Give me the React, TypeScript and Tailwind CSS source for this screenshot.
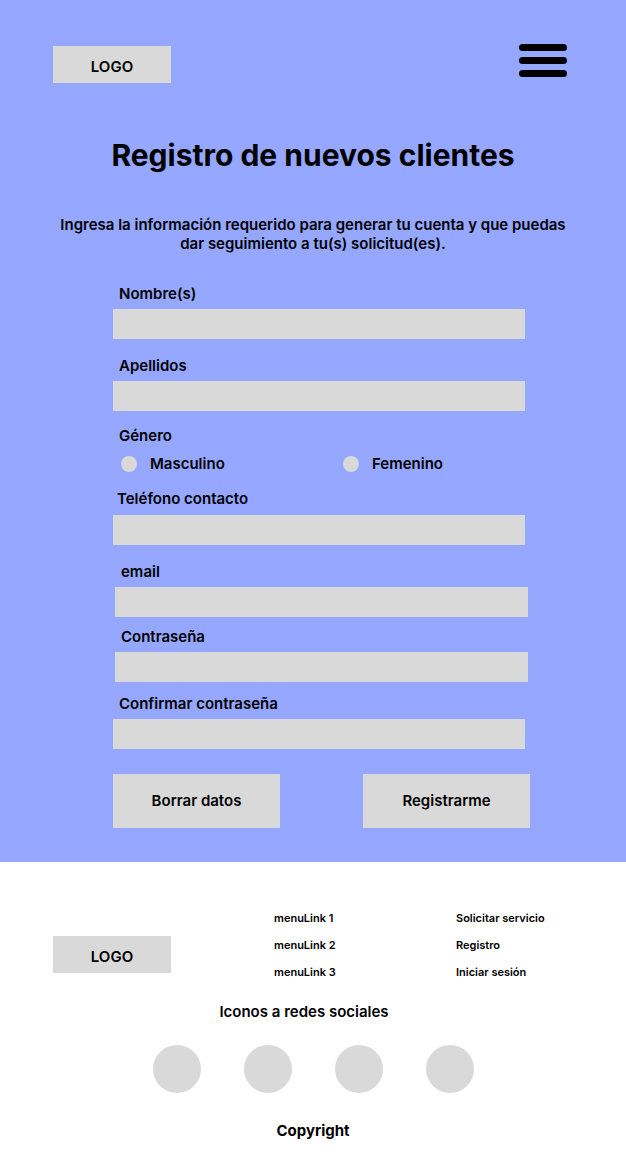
import React from "react";

type FieldProps = {
  label: string;
  labelClass: string;
  boxClass: string;
};

function Field({ label, labelClass, boxClass }: FieldProps) {
  return (
    <div className="flex flex-col">
      <label className={`text-[15px] leading-[18px] font-semibold text-black ${labelClass}`}>
        {label}
      </label>
      <div className={`h-[30px] bg-[#d9d9d9] ${boxClass}`} />
    </div>
  );
}

function Radio({ label }: { label: string }) {
  return (
    <div className="flex items-center">
      <span className="w-4 h-4 rounded-full bg-[#d9d9d9]" />
      <span className="ml-[13px] text-[15px] leading-[18px] font-semibold">{label}</span>
    </div>
  );
}

function Logo({ className }: { className: string }) {
  return (
    <div
      className={`w-[118px] h-[37px] pt-[6px] bg-[#d9d9d9] flex items-center justify-center text-[15px] font-semibold ${className}`}
    >
      LOGO
    </div>
  );
}

export default function App() {
  return (
    <div className="w-[626px] min-h-[1165px] bg-white text-black font-['Inter','Noto_Sans',sans-serif]">
      {/* registro */}
      <section className="bg-[#95a7ff] pb-[34px]">
        <header className="flex items-start justify-between pl-[53px] pr-[59px] pt-[44px]">
          <Logo className="mt-[2px]" />
          <div className="flex flex-col gap-[6px]">
            <span className="block w-12 h-[7px] rounded-full bg-black" />
            <span className="block w-12 h-[7px] rounded-full bg-black" />
            <span className="block w-12 h-[7px] rounded-full bg-black" />
          </div>
        </header>

        <h1 className="mt-[54px] text-center text-[30px] leading-[36px] font-bold">
          Registro de nuevos clientes
        </h1>
        <p className="mt-[42px] px-[40px] text-center text-[15px] leading-[19px] font-semibold">
          Ingresa la información requerido para generar tu cuenta y que puedas
          <br />
          dar seguimiento a tu(s) solicitud(es).
        </p>

        <form className="mt-[32px] ml-[113px] w-[417px] flex flex-col">
          <Field label="Nombre(s)" labelClass="ml-[6px] mb-[6px]" boxClass="w-[412px]" />
          <div className="mt-[18px]">
            <Field label="Apellidos" labelClass="ml-[6px] mb-[6px]" boxClass="w-[412px]" />
          </div>

          <div className="mt-[16px] flex flex-col">
            <span className="block ml-[6px] text-[15px] leading-[18px] font-semibold">Género</span>
            <div className="mt-[10px] ml-[8px] flex">
              <div className="w-[222px]">
                <Radio label="Masculino" />
              </div>
              <Radio label="Femenino" />
            </div>
          </div>

          <div className="mt-[17px]">
            <Field label="Teléfono contacto" labelClass="ml-[4px] mb-[7px]" boxClass="w-[412px]" />
          </div>
          <div className="mt-[18px]">
            <Field label="email" labelClass="ml-[8px] mb-[6px]" boxClass="ml-[2px] w-[413px]" />
          </div>
          <div className="mt-[11px]">
            <Field label="Contraseña" labelClass="ml-[8px] mb-[6px]" boxClass="ml-[2px] w-[413px]" />
          </div>
          <div className="mt-[13px]">
            <Field label="Confirmar contraseña" labelClass="ml-[6px] mb-[6px]" boxClass="w-[412px]" />
          </div>

          <div className="mt-[25px] flex justify-between">
            <button type="button" className="w-[167px] h-[54px] bg-[#d9d9d9] text-[15px] font-semibold">
              Borrar datos
            </button>
            <button type="button" className="w-[167px] h-[54px] bg-[#d9d9d9] text-[15px] font-semibold">
              Registrarme
            </button>
          </div>
        </form>
      </section>

      {/* footer */}
      <footer className="pt-[43px] pb-[25px]">
        <div className="flex items-start pl-[53px]">
          <Logo className="mt-[31px]" />
          <ul className="ml-[103px] w-[182px] text-[11px] leading-[27px] font-semibold">
            <li>menuLink 1</li>
            <li>menuLink 2</li>
            <li>menuLink 3</li>
          </ul>
          <ul className="text-[11px] leading-[27px] font-semibold">
            <li>Solicitar servicio</li>
            <li>Registro</li>
            <li>Iniciar sesión</li>
          </ul>
        </div>

        <p className="mt-[16px] pr-[18px] text-center text-[15px] leading-[20px] font-semibold">
          Iconos a redes sociales
        </p>
        <div className="mt-[23px] flex justify-center gap-[43px]">
          <span className="w-12 h-12 rounded-full bg-[#d9d9d9]" />
          <span className="w-12 h-12 rounded-full bg-[#d9d9d9]" />
          <span className="w-12 h-12 rounded-full bg-[#d9d9d9]" />
          <span className="w-12 h-12 rounded-full bg-[#d9d9d9]" />
        </div>
        <p className="mt-[28px] text-center text-[15px] leading-[20px] font-bold">Copyright</p>
      </footer>
    </div>
  );
}
